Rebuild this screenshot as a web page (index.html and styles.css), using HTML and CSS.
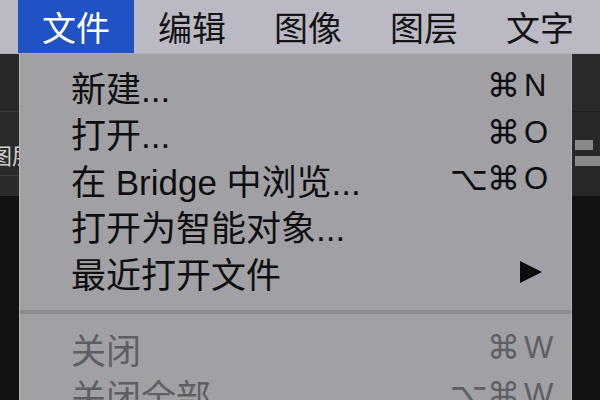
FILE: index.html
```html
<!DOCTYPE html>
<html lang="zh">
<head>
<meta charset="utf-8">
<link rel="stylesheet" href="styles.css">
</head>
<body>
<div class="menubar">
  <div class="mb-item active">文件</div>
  <div class="mb-item">编辑</div>
  <div class="mb-item">图像</div>
  <div class="mb-item">图层</div>
  <div class="mb-item">文字</div>
</div>
<div class="stage">
  <div class="side left">
    <div class="band b1"></div>
    <div class="band b2"><span class="side-label">图层</span></div>
    <div class="band b3"></div>
    <div class="band b4"></div>
  </div>
  <div class="dropdown">
    <div class="row"><span class="label">新建...</span><span class="keys"><span class="k-opt"></span><span class="k-cmd">⌘</span><span class="k-key">N</span></span></div>
    <div class="row"><span class="label">打开...</span><span class="keys"><span class="k-opt"></span><span class="k-cmd">⌘</span><span class="k-key">O</span></span></div>
    <div class="row"><span class="label">在 Bridge 中浏览...</span><span class="keys"><span class="k-opt">⌥</span><span class="k-cmd">⌘</span><span class="k-key">O</span></span></div>
    <div class="row"><span class="label">打开为智能对象...</span></div>
    <div class="row"><span class="label">最近打开文件</span><span class="arrow"></span></div>
    <div class="sep"></div>
    <div class="row disabled"><span class="label">关闭</span><span class="keys"><span class="k-opt"></span><span class="k-cmd">⌘</span><span class="k-key">W</span></span></div>
    <div class="row disabled"><span class="label">关闭全部</span><span class="keys"><span class="k-opt">⌥</span><span class="k-cmd">⌘</span><span class="k-key">W</span></span></div>
  </div>
  <div class="side right">
    <div class="band r1"></div>
    <div class="band r2">
      <div class="r-bar"></div>
      <div class="r-widgets">
        <div class="r-w w1"></div>
        <div class="r-w w2"></div>
      </div>
    </div>
    <div class="band b4"></div>
  </div>
</div>
</body>
</html>
```

FILE: styles.css
```css
* { box-sizing: border-box; }
html, body {
  margin: 0;
  padding: 0;
  width: 600px;
  height: 400px;
  overflow: hidden;
  background: #111;
  font-family: "Liberation Sans", "Noto Sans CJK SC", sans-serif;
}
.menubar {
  height: 54px;
  background: #bbbac4;
  display: flex;
  padding-left: 18px;
  border-bottom: 1px solid #aeadb6;
}
.mb-item {
  padding: 0 24px;
  font-size: 34px;
  line-height: 53px;
  color: #141414;
  font-family: "Noto Sans CJK SC", sans-serif;
}
.mb-item.active {
  background: #2052c4;
  color: #fff;
}
.stage {
  display: grid;
  grid-template-columns: 19px 553px 28px;
  height: 346px;
}
.side {
  display: flex;
  flex-direction: column;
  overflow: hidden;
}
.band { flex: none; }
.left .b1 { height: 58px; background: #292929; border-bottom: 1px solid #3a3a3a; }
.left .b2 {
  height: 64px;
  background: #2a2a2a;
  border-bottom: 1px solid #3d3d3d;
  position: relative;
}
.side-label {
  position: absolute;
  left: -10px;
  top: 28px;
  font-size: 22px;
  line-height: 28px;
  color: #cfcfcf;
  white-space: nowrap;
  font-family: "Noto Sans CJK SC", sans-serif;
}
.left .b3 { height: 20px; background: #2b2b2b; }
.b4 { flex: 1; background: #121212; }
.right .r1 { height: 58px; background: #2a2a2a; border-bottom: 1px solid #1c1c1c; }
.right .r2 {
  height: 84px;
  background: #282828;
  display: flex;
  align-items: flex-start;
  padding-top: 22px;
  gap: 3px;
}
.r-bar { width: 3px; height: 36px; background: #7e7e7e; }
.r-widgets { display: flex; flex-direction: column; gap: 6px; padding-top: 6px; }
.r-w { height: 10px; background: #8a8a8a; }
.w1 { width: 18px; }
.w2 { width: 30px; }
.dropdown {
  background: #a1a0a5;
  border-left: 1px solid #b5b4b9;
  border-right: 1px solid #b3b2b7;
  padding-top: 9px;
  padding-left: 51px;
  overflow: hidden;
}
.row {
  height: 46.5px;
  display: flex;
  align-items: center;
  font-size: 35px;
  color: #0e0e0e;
  white-space: nowrap;
}
.row .label { flex: 1; }
.row.disabled { color: #5f5e63; }
.keys {
  display: flex;
  align-items: center;
  height: 46px;
  font-family: "DejaVu Sans", "Liberation Sans", sans-serif;
}
.k-opt { width: 37px; font-size: 33px; line-height: 46px; }
.k-cmd { width: 37px; font-size: 33px; line-height: 46px; }
.k-key {
  width: 47px;
  font-family: "Liberation Sans", sans-serif;
  font-size: 31px;
  line-height: 46px;
}
.arrow {
  width: 0;
  height: 0;
  border-top: 11px solid transparent;
  border-bottom: 11px solid transparent;
  border-left: 22px solid #0c0c0c;
  margin-right: 29px;
}
.sep {
  height: 4px;
  background: #8e8d92;
  margin: 14.5px 0 11px -51px;
}
```
